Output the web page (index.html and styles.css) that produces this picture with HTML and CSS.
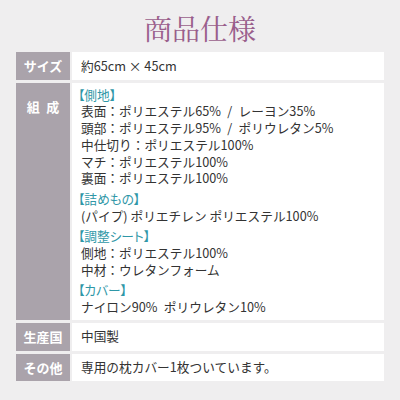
FILE: index.html
```html
<!DOCTYPE html>
<html lang="ja">
<head>
<meta charset="utf-8">
<link rel="stylesheet" href="styles.css">
</head>
<body>
<div class="page">
  <h1 class="title">商品仕様</h1>
  <div class="spec">
    <div class="row">
      <div class="label">サイズ</div>
      <div class="value">約65cm × 45cm</div>
    </div>
    <div class="row">
      <div class="label label-top">組&ensp;成</div>
      <div class="value value-multi">
        <div class="group">
          <div class="head">【側地】</div>
          <div>表面：ポリエステル65%&ensp;/&ensp;レーヨン35%</div>
          <div>頭部：ポリエステル95%&ensp;/&ensp;ポリウレタン5%</div>
          <div>中仕切り：ポリエステル100%</div>
          <div>マチ：ポリエステル100%</div>
          <div>裏面：ポリエステル100%</div>
        </div>
        <div class="group">
          <div class="head">【詰めもの】</div>
          <div>(パイプ) ポリエチレン ポリエステル100%</div>
        </div>
        <div class="group">
          <div class="head">【調整シート】</div>
          <div>側地：ポリエステル100%</div>
          <div>中材：ウレタンフォーム</div>
        </div>
        <div class="group">
          <div class="head">【カバー】</div>
          <div>ナイロン90%&ensp;ポリウレタン10%</div>
        </div>
      </div>
    </div>
    <div class="row">
      <div class="label">生産国</div>
      <div class="value">中国製</div>
    </div>
    <div class="row">
      <div class="label">その他</div>
      <div class="value">専用の枕カバー1枚ついています。</div>
    </div>
  </div>
</div>
</body>
</html>
```

FILE: styles.css
```css
html, body {
  margin: 0;
  padding: 0;
  background: #efeeef;
}
.page {
  width: 400px;
  height: 400px;
  box-sizing: border-box;
  padding: 10px 16px 0;
  font-family: "Noto Sans CJK JP", "Noto Sans", sans-serif;
  color: #333;
}
.title {
  margin: 0;
  height: 42px;
  line-height: 36px;
  text-align: center;
  font-family: "Noto Serif CJK JP", "Noto Sans CJK JP", serif;
  font-weight: 400;
  font-size: 28px;
  color: #9a5e8c;
}
.spec {
  display: flex;
  flex-direction: column;
  gap: 3px;
}
.row {
  display: flex;
  gap: 2px;
}
.label {
  width: 54px;
  flex: none;
  background: #aaa3ab;
  color: #fff;
  font-weight: 700;
  font-size: 13px;
  display: flex;
  align-items: center;
  justify-content: center;
}
.label-top {
  align-items: flex-start;
  padding-top: 14px;
}
.value {
  flex: 1;
  background: #fff;
  font-size: 12.7px;
  line-height: 16.7px;
  padding: 5.5px 9px;
}
.value-multi {
  padding: 4px 9px 4px;
  display: flex;
  flex-direction: column;
  gap: 4px;
}
.head {
  color: #2f97a7;
  font-feature-settings: "palt";
  margin-left: -3px;
}
```
